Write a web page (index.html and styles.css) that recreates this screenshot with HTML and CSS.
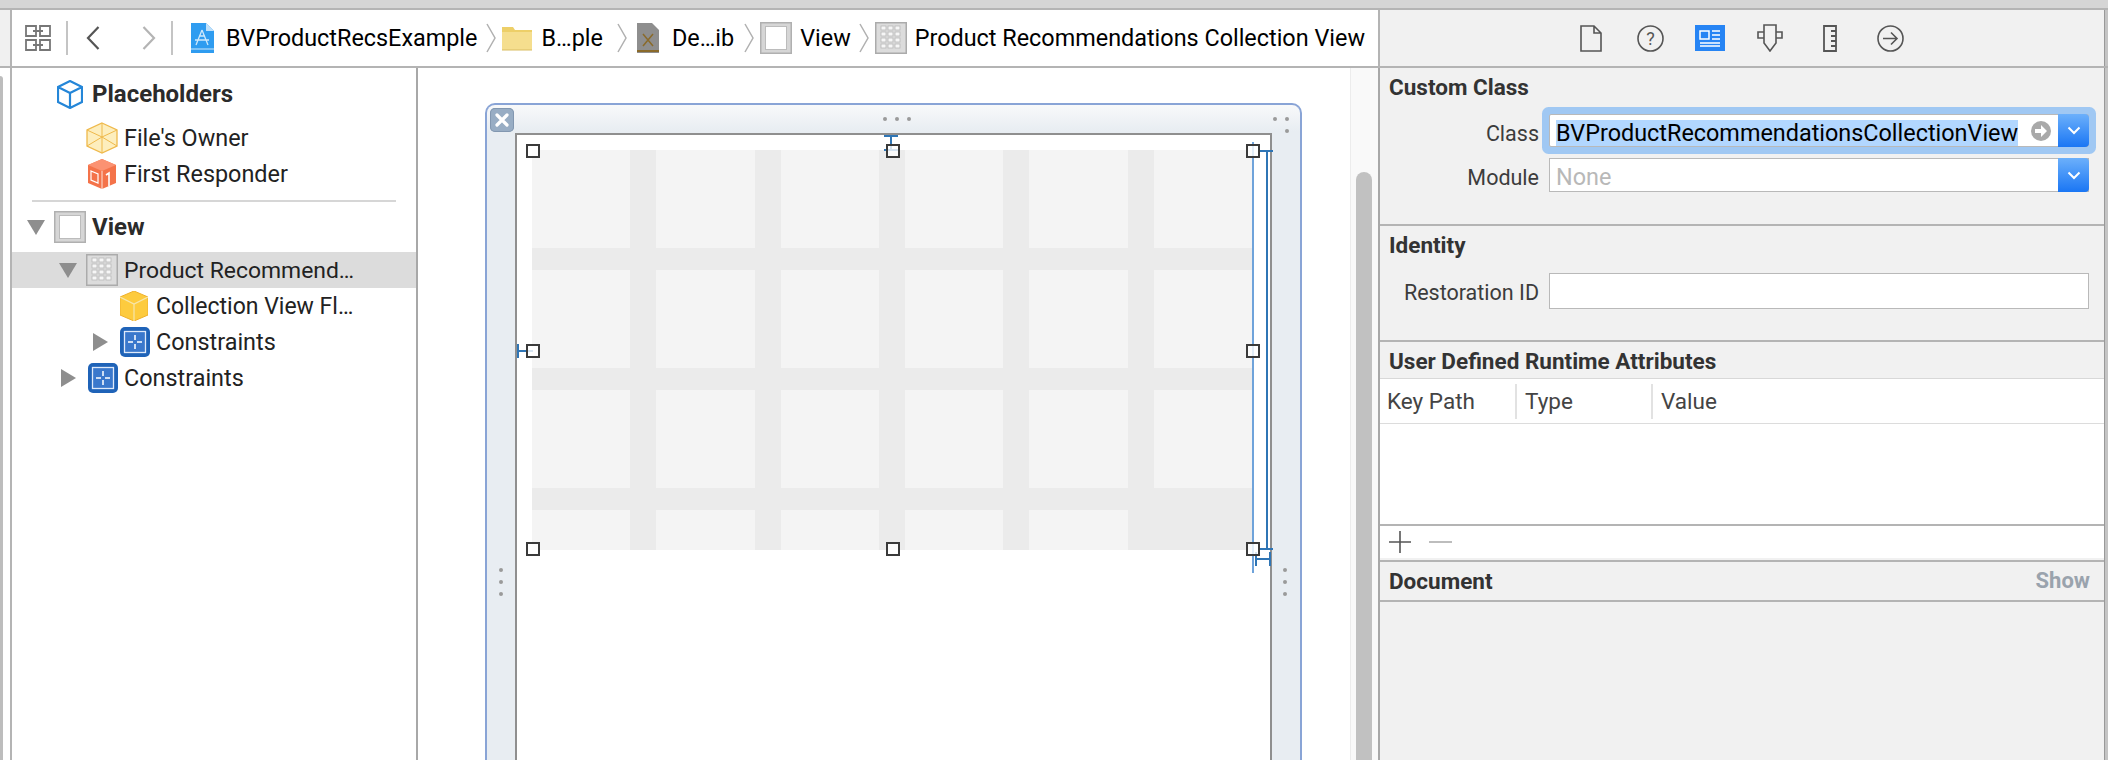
FILE: index.html
```html
<!DOCTYPE html>
<html lang="en">
<head>
<meta charset="utf-8">
<title>Xcode Interface Builder</title>
<link rel="stylesheet" href="styles.css">
</head>
<body>
<svg class="defs" width="0" height="0" aria-hidden="true">
  <symbol id="i-view" viewBox="0 0 32 32">
    <rect x=".75" y=".75" width="30.500" height="30.500" fill="#d6d6d6" stroke="#b0b0b0" stroke-width="1.500"/>
    <rect x="5.500" y="4.500" width="21" height="23" fill="#fff" stroke="#bcbcbc"/>
  </symbol>
  <symbol id="i-grid" viewBox="0 0 32 32">
    <rect x=".75" y=".75" width="30.500" height="30.500" fill="#dcdcdc" stroke="#ababab" stroke-width="1.500"/>
    <g fill="#f6f6f6" stroke="#b8b8b8" stroke-width=".8">
      <rect x="6" y="4" width="5" height="4"/><rect x="13" y="4" width="5" height="4"/><rect x="20" y="4" width="5" height="4"/>
      <rect x="6" y="10" width="5" height="4"/><rect x="13" y="10" width="5" height="4"/><rect x="20" y="10" width="5" height="4"/>
      <rect x="6" y="16" width="5" height="4"/><rect x="13" y="16" width="5" height="4"/><rect x="20" y="16" width="5" height="4"/>
      <rect x="6" y="22" width="5" height="4"/><rect x="13" y="22" width="5" height="4"/><rect x="20" y="22" width="5" height="4"/>
    </g>
  </symbol>
  <symbol id="i-constraints" viewBox="0 0 30 30">
    <rect width="30" height="30" rx="5" fill="#1f63b8"/>
    <rect x="4.500" y="4.500" width="21" height="21" fill="#3a78cc" stroke="#dfeafa" stroke-width="1.300"/>
    <path d="M15 8v5M15 17v5M8 15h5M17 15h5" stroke="#fff" stroke-width="1.500"/>
  </symbol>
  <symbol id="i-chev" viewBox="0 0 10 30">
    <path d="M1 1l8 14-8 14" fill="none" stroke="#b0b0b0" stroke-width="1.500"/>
  </symbol>
</svg>

<div class="top-strip"></div>

<header class="toolbar">
  <div class="rail-left"></div>
  <nav class="crumbs">
    <svg class="t-grid" width="26" height="26" viewBox="0 0 26 26"><path d="M1 1h10v10H1zM15 1h10v10H15zM1 15h10v10H1zM15 15h10v10H15zM8 6h10M8 20h10" fill="none" stroke="#777" stroke-width="1.800"/></svg>
    <span class="t-sep t-sep-a"></span>
    <svg class="t-back" width="14" height="24" viewBox="0 0 14 24"><path d="M12.500 1L2 12l10.500 11" fill="none" stroke="#555" stroke-width="2.200"/></svg>
    <svg class="t-fwd" width="14" height="24" viewBox="0 0 14 24"><path d="M1.500 1L12 12 1.500 23" fill="none" stroke="#b4b4b4" stroke-width="2.200"/></svg>
    <span class="t-sep t-sep-b"></span>
    <svg class="c-app" width="24" height="30" viewBox="0 0 24 30"><path d="M1 0h15l8 8v22H1z" fill="#2f9cf0"/><path d="M16 0l8 8h-8z" fill="#bfe0fa"/><path d="M1 26h23" stroke="#cfe8fb" stroke-width="1"/><path d="M12 7L6 22M12 7l6 15M5 17h14M9 13h6" stroke="#cfe8fb" stroke-width="1.300" fill="none"/></svg>
    <span class="c-text c-t1">BVProductRecsExample</span>
    <svg class="c-chev" width="10" height="30"><use href="#i-chev"/></svg>
    <svg class="c-folder" width="30" height="25" viewBox="0 0 30 25"><path d="M0 1h11l2 3h17v20H0z" fill="#edcf68"/><path d="M0 6h30v18H0z" fill="#f5de8e"/><path d="M0 24h30" stroke="#d9bd62"/></svg>
    <span class="c-text c-t2">B…ple</span>
    <svg class="c-chev c-chev2" width="10" height="30"><use href="#i-chev"/></svg>
    <svg class="c-xib" width="22" height="30" viewBox="0 0 22 30"><path d="M0 0h15l7 7v23H0z" fill="#8e8e8e"/><path d="M0 28h22" stroke="#8a6a2a" stroke-width="2"/><path d="M6 11l10 12M16 11L6 23" stroke="#8a6a2a" stroke-width="1.500"/></svg>
    <span class="c-text c-t3">De…ib</span>
    <svg class="c-chev c-chev3" width="10" height="30"><use href="#i-chev"/></svg>
    <svg class="c-view" width="32" height="32"><use href="#i-view"/></svg>
    <span class="c-text c-t4">View</span>
    <svg class="c-chev c-chev4" width="10" height="30"><use href="#i-chev"/></svg>
    <svg class="c-gridicon" width="32" height="32"><use href="#i-grid"/></svg>
    <span class="c-text c-t5">Product Recommendations Collection View</span>
  </nav>
  <div class="tabs">
    <svg width="22" height="27" viewBox="0 0 22 27"><path d="M1 1h13l7 7v18H1zM14 1v7h7" fill="none" stroke="#555" stroke-width="1.600"/></svg>
    <svg width="27" height="27" viewBox="0 0 27 27"><circle cx="13.500" cy="13.500" r="12.500" fill="none" stroke="#555" stroke-width="1.600"/><text x="13.500" y="19.500" class="tab-q" text-anchor="middle">?</text></svg>
    <svg width="30" height="26" viewBox="0 0 30 26"><rect width="30" height="26" fill="#2684f4"/><path d="M5 6h9v8H5z" fill="none" stroke="#fff" stroke-width="1.500"/><path d="M17 6h8M17 10h8M17 14h8M5 18h20M5 21h20" stroke="#fff" stroke-width="1.500"/></svg>
    <svg width="26" height="28" viewBox="0 0 26 28"><path d="M7 1h12v18l-6 8-6-8zM7 8H1v6h6M19 8h6v6h-6" fill="none" stroke="#555" stroke-width="1.600"/></svg>
    <svg width="14" height="27" viewBox="0 0 14 27"><path d="M1 1h12v25H1zM13 6H8M13 11H8M13 16H8M13 21H8" fill="none" stroke="#555" stroke-width="1.800"/></svg>
    <svg width="27" height="27" viewBox="0 0 27 27"><circle cx="13.500" cy="13.500" r="12.500" fill="none" stroke="#555" stroke-width="1.600"/><path d="M6 13.500h14M14 7.500l6 6-6 6" fill="none" stroke="#555" stroke-width="1.600"/></svg>
  </div>
  <div class="rail-right"></div>
</header>

<main class="workspace">
  <div class="rail-left rail-work"><span class="rail-thumb"></span></div>

  <aside class="outline">
    <div class="row row-ph">
      <svg class="ic-ph" width="26" height="29" viewBox="0 0 26 29"><path d="M13 1l12 6v15l-12 6-12-6V7zM1 7l12 6 12-6M13 13v15" fill="none" stroke="#2486d8" stroke-width="2.200"/></svg>
      <span class="bold">Placeholders</span>
    </div>
    <div class="row row-owner">
      <svg width="32" height="32" viewBox="0 0 32 32"><path d="M16 1l15 7v16l-15 7-15-7V8z" fill="#fdeebd" stroke="#efb94b" stroke-width="1.300"/><path d="M1 8l15 7 15-7M16 15v16M16 1v14M1 24l15-9 15 9" fill="none" stroke="#efb94b" stroke-width="1"/></svg>
      <span>File's Owner</span>
    </div>
    <div class="row row-first">
      <svg width="28" height="30" viewBox="0 0 28 30"><path d="M14 0l14 6v18l-14 6-14-6V6z" fill="#f4734a"/><path d="M0 6l14 6 14-6-14-6z" fill="#fb9272"/><path d="M14 12v18" stroke="#fff" stroke-width=".8"/><path d="M3 12l7 3v9l-7-3z" fill="none" stroke="#fff" stroke-width="1.200"/><path d="M18 16l3-2v13" fill="none" stroke="#fff" stroke-width="1.600"/></svg>
      <span>First Responder</span>
    </div>
    <hr class="rule">
    <div class="row row-view">
      <span class="tri-down tri-view"></span>
      <svg width="32" height="32"><use href="#i-view"/></svg>
      <span class="bold">View</span>
    </div>
    <div class="row row-sel">
      <span class="tri-down"></span>
      <svg width="32" height="32"><use href="#i-grid"/></svg>
      <span>Product Recommend…</span>
    </div>
    <div class="row row-flow">
      <svg width="28" height="30" viewBox="0 0 28 30"><path d="M14 0l14 6v18l-14 6-14-6V6z" fill="#fdcb3e" stroke="#eeb02c"/><path d="M0 6l14 7 14-7M14 13v17" fill="none" stroke="#f6e6ac" stroke-width="1.200"/></svg>
      <span>Collection View Fl…</span>
    </div>
    <div class="row row-con1">
      <span class="tri-right"></span>
      <svg width="30" height="30"><use href="#i-constraints"/></svg>
      <span>Constraints</span>
    </div>
    <div class="row row-con2">
      <span class="tri-right"></span>
      <svg width="30" height="30"><use href="#i-constraints"/></svg>
      <span>Constraints</span>
    </div>
  </aside>

  <section class="canvas">
    <div class="frame">
      <span class="frame-close"><svg width="14" height="14" viewBox="0 0 14 14"><path d="M2 2l10 10M12 2L2 12" stroke="#fff" stroke-width="3.200" stroke-linecap="round"/></svg></span>
      <span class="dots dots-top"><i></i><i></i><i></i></span>
      <span class="dots dots-corner"><i></i><i></i><i></i></span>
      <span class="dots dots-left"><i></i><i></i><i></i></span>
      <span class="dots dots-right"><i></i><i></i><i></i></span>
      <div class="view">
        <div class="cv">
          <b></b><b></b><b></b><b></b><b></b><b></b>
          <b></b><b></b><b></b><b></b><b></b><b></b>
          <b></b><b></b><b></b><b></b><b></b><b></b>
          <b></b><b></b><b></b><b></b><b></b><b class="cell-dark"></b>
          <span class="sel-line"></span>
          <span class="c-v c-right"></span>
          <span class="c-h c-right-top"></span>
          <span class="c-h c-right-bot"></span>
          <span class="c-h c-beam-bot"></span>
          <span class="c-v c-beam-bot-l"></span>
          <span class="c-v c-beam-bot-r"></span>
          <span class="c-v c-beam-top"></span>
          <span class="c-h c-beam-top-a"></span>
          <span class="c-h c-beam-top-b"></span>
          <span class="c-h c-beam-left"></span>
          <span class="c-v c-beam-left-cap"></span>
          <span class="handle h-tl"></span>
          <span class="handle h-tc"></span>
          <span class="handle h-tr"></span>
          <span class="handle h-ml"></span>
          <span class="handle h-mr"></span>
          <span class="handle h-bl"></span>
          <span class="handle h-bc"></span>
          <span class="handle h-br"></span>
        </div>
      </div>
    </div>
  </section>
  <div class="scroller"><span class="scroller-thumb"></span></div>

  <aside class="inspector">
    <section class="panel panel-class">
      <h2>Custom Class</h2>
      <div class="form-row form-class">
        <label>Class</label>
        <div class="field field-focus">
          <span class="selected">BVProductRecommendationsCollectionView</span>
          <svg class="go" width="20" height="20" viewBox="0 0 20 20"><circle cx="10" cy="10" r="10" fill="#a9a9a9"/><path d="M4 8h6V4l6 6-6 6v-4H4z" fill="#fff"/></svg>
          <span class="drop"><svg width="14" height="9" viewBox="0 0 14 9"><path d="M1.500 1.500L7 7l5.500-5.500" fill="none" stroke="#fff" stroke-width="2"/></svg></span>
        </div>
      </div>
      <div class="form-row form-module">
        <label>Module</label>
        <div class="field">
          <span class="placeholder">None</span>
          <span class="drop"><svg width="14" height="9" viewBox="0 0 14 9"><path d="M1.500 1.500L7 7l5.500-5.500" fill="none" stroke="#fff" stroke-width="2"/></svg></span>
        </div>
      </div>
    </section>
    <section class="panel panel-identity">
      <h2>Identity</h2>
      <div class="form-row form-rest">
        <label>Restoration ID</label>
        <div class="field field-plain"></div>
      </div>
    </section>
    <section class="panel panel-attrs">
      <h2>User Defined Runtime Attributes</h2>
      <div class="table">
        <div class="thead">
          <span class="th th-key">Key Path</span>
          <span class="th th-type">Type</span>
          <span class="th th-value">Value</span>
        </div>
        <div class="tbody"></div>
      </div>
      <div class="table-foot">
        <svg width="24" height="24" viewBox="0 0 24 24"><path d="M12 1v22M1 12h22" stroke="#555" stroke-width="1.600"/></svg>
        <svg width="23" height="24" viewBox="0 0 23 24"><path d="M0 12h23" stroke="#bdbdbd" stroke-width="2"/></svg>
      </div>
    </section>
    <section class="panel panel-doc">
      <h2>Document</h2>
      <span class="show">Show</span>
    </section>
  </aside>
  <div class="rail-right"></div>
</main>
</body>
</html>
```
FILE: styles.css
```css
* { box-sizing: border-box; }
html, body { margin: 0; padding: 0; }
body {
  width: 2108px;
  height: 760px;
  overflow: hidden;
  display: flex;
  flex-direction: column;
  background: #fff;
  font-family: Roboto, "Liberation Sans", sans-serif;
  font-size: 23px;
  color: #222;
}
.defs { position: absolute; }
svg { display: block; flex: none; }

.top-strip { height: 10px; flex: none; background: #d5d5d5; border-bottom: 2px solid #b4b4b4; }

.toolbar {
  height: 58px;
  flex: none;
  display: flex;
  background: #fff;
  border-bottom: 2px solid #b4b4b4;
}
.rail-left { width: 12px; flex: none; background: #f0f0f0; border-right: 2px solid #b4b4b4; }
.rail-right { width: 4px; flex: none; background: #c4c4c4; border-left: 1px solid #999; }

.crumbs {
  width: 1366px;
  flex: none;
  display: flex;
  align-items: center;
  color: #000;
  white-space: nowrap;
}
.t-grid { margin-left: 13px; }
.t-sep { width: 2px; height: 34px; background: #c4c4c4; flex: none; }
.t-sep-a { margin-left: 15px; }
.t-back { margin-left: 18px; }
.t-fwd { margin-left: 42px; }
.t-sep-b { margin-left: 15px; }
.c-app { margin-left: 17px; }
.c-text { font-size: 23.4px; line-height: 28px; }
.c-t1 { margin-left: 12px; }
.c-chev { margin-left: 9px; }
.c-folder { margin-left: 6px; }
.c-t2 { margin-left: 9px; }
.c-chev2 { margin-left: 14px; }
.c-xib { margin-left: 10px; }
.c-t3 { margin-left: 13px; }
.c-chev3 { margin-left: 10px; }
.c-view { margin-left: 6px; }
.c-t4 { margin-left: 8px; }
.c-chev4 { margin-left: 8px; }
.c-gridicon { margin-left: 6px; }
.c-t5 { margin-left: 8px; }

.tabs {
  flex: 1;
  display: flex;
  align-items: center;
  background: #f1f1f1;
  border-left: 2px solid #b4b4b4;
  padding-left: 200px;
}
.tabs svg:nth-child(2) { margin-left: 35px; }
.tabs svg:nth-child(3) { margin-left: 31px; }
.tabs svg:nth-child(4) { margin-left: 32px; }
.tabs svg:nth-child(5) { margin-left: 40px; }
.tabs svg:nth-child(6) { margin-left: 40px; }
.tab-q { font: 18px Roboto, sans-serif; fill: #555; }

.workspace { flex: 1; min-height: 0; display: flex; overflow: hidden; }
.rail-work { background: #fff; position: relative; }
.rail-thumb { position: absolute; left: 0; top: 8px; bottom: 0; width: 3px; background: #bdbdbd; border-top-right-radius: 3px; }

.outline { width: 406px; flex: none; border-right: 2px solid #a8a8a8; padding-top: 8px; }
.row { display: flex; align-items: center; height: 36px; font-size: 23.4px; color: #222; white-space: nowrap; }
.bold { font-weight: 700; color: #2b2b2b; font-size: 24px; }
.row-ph { padding-left: 45px; height: 36px; }
.row-ph span { margin-left: 9px; }
.row-owner { padding-left: 74px; margin-top: 8px; }
.row-owner span { margin-left: 6px; }
.row-first { padding-left: 76px; }
.row-first span { margin-left: 8px; }
.rule { height: 2px; margin: 8px 20px 0 20px; border: 0; background: #d6d6d6; }
.row-view { height: 50px; padding-left: 15px; }
.row-view svg { margin-left: 9px; }
.row-view .bold { margin-left: 6px; }
.row-sel { background: #dcdcdc; padding-left: 47px; font-size: 22.9px; }
.row-sel svg { margin-left: 9px; }
.row-sel span:last-child { margin-left: 6px; }
.row-flow { padding-left: 108px; font-size: 23px; }
.row-flow span { margin-left: 8px; }
.row-con1 { padding-left: 81px; }
.row-con1 svg { margin-left: 12px; }
.row-con1 span:last-child { margin-left: 6px; }
.row-con2 { padding-left: 49px; }
.row-con2 svg { margin-left: 12px; }
.row-con2 span:last-child { margin-left: 6px; }
.tri-down { width: 0; height: 0; flex: none; border-left: 9px solid transparent; border-right: 9px solid transparent; border-top: 15px solid #8e8e8e; }
.tri-right { width: 0; height: 0; flex: none; border-top: 9px solid transparent; border-bottom: 9px solid transparent; border-left: 15px solid #8e8e8e; }

.canvas { width: 932px; flex: none; padding: 35px 0 0 67px; background: #fff; }
.frame {
  position: relative;
  width: 817px;
  height: 100%;
  padding: 28px 28px 0 28px;
  border: 2px solid #89a4d6;
  border-bottom: 0;
  border-radius: 10px 10px 0 0;
  background: linear-gradient(#f8f9fa, #e8edf2 26px);
}
.frame-close {
  position: absolute;
  left: 3px;
  top: 3px;
  width: 24px;
  height: 24px;
  display: flex;
  align-items: center;
  justify-content: center;
  border-radius: 5px;
  background: #98adc4;
  box-shadow: inset 0 0 0 1px #8297b0;
}
.dots { position: absolute; display: flex; gap: 8px; }
.dots i { width: 4px; height: 4px; border-radius: 50%; background: #9a9a9a; }
.dots-top { left: 396px; top: 12px; }
.dots-corner { left: 786px; top: 12px; width: 16px; flex-wrap: wrap; justify-content: flex-end; }
.dots-left, .dots-right { flex-direction: column; top: 463px; }
.dots-left { left: 12px; }
.dots-right { left: 796px; }

.view { width: 757px; height: 100%; border: 2px solid #8f8f8f; border-bottom: 0; background: #fff; padding: 15px; }
.cv {
  position: relative;
  width: 720px;
  height: 400px;
  display: grid;
  grid-template-columns: repeat(6, 1fr);
  grid-template-rows: 98px 98px 98px 40px;
  column-gap: 26px;
  row-gap: 22px;
  background: #ebebeb;
}
.cv b { background: #f4f4f4; }
.cv .cell-dark { background: #ebebeb; }

.handle { position: absolute; width: 14px; height: 14px; border: 2.500px solid #3a3a3a; background: rgba(255,255,255,.8); }
.h-tl { left: -6px; top: -6px; }
.h-tc { left: 354px; top: -6px; }
.h-tr { left: 714px; top: -6px; }
.h-ml { left: -6px; top: 194px; }
.h-mr { left: 714px; top: 194px; }
.h-bl { left: -6px; top: 392px; }
.h-bc { left: 354px; top: 392px; }
.h-br { left: 714px; top: 392px; }

.sel-line { position: absolute; left: 720px; top: -8px; width: 2px; height: 431px; background: #6fa3da; }
.c-v, .c-h { position: absolute; background: #2f75b5; }
.c-v { width: 2px; }
.c-h { height: 2px; }
.c-right { left: 734px; top: 0; height: 398px; }
.c-right-top { left: 727px; top: 0; width: 14px; }
.c-right-bot { left: 727px; top: 398px; width: 14px; }
.c-beam-bot { left: 723px; top: 408px; width: 14px; }
.c-beam-bot-l { left: 723px; top: 402px; height: 14px; }
.c-beam-bot-r { left: 737px; top: 402px; height: 14px; }
.c-beam-top { left: 358px; top: -15px; height: 14px; }
.c-beam-top-a { left: 352px; top: -15px; width: 14px; }
.c-beam-top-b { left: 352px; top: -1px; width: 14px; }
.c-beam-left { left: -15px; top: 200px; width: 16px; }
.c-beam-left-cap { left: -15px; top: 194px; height: 14px; }

.scroller { width: 28px; flex: none; display: flex; background: #f9f9f9; border-left: 1px solid #ececec; padding: 104px 0 0 5px; }
.scroller-thumb { display: block; width: 16px; border-radius: 8px 8px 0 0; background: #c1c1c1; }

.inspector { flex: 1; min-width: 0; background: #f1f1f1; border-left: 2px solid #a8a8a8; }
.panel { position: relative; border-bottom: 2px solid #b4b4b4; }
.panel h2 { margin: 0; padding-left: 9px; font-size: 22.5px; font-weight: 700; color: #333; line-height: 38px; height: 38px; }
.panel-class { height: 158px; }
.panel-identity { height: 116px; }
.panel-attrs { height: 220px; }
.panel-attrs h2 { height: 36px; line-height: 38px; }
.panel-doc { height: 40px; }

.form-row { display: flex; align-items: center; padding-right: 15px; }
.form-row label { width: 159px; flex: none; text-align: right; font-size: 21.500px; color: #3c3c3c; margin-right: 10px; }
.form-class label { padding-top: 5px; }
.form-module label { padding-top: 4px; }
.form-rest label { padding-top: 2px; }
.field { flex: 1; display: flex; align-items: center; background: #fff; border: 1px solid #b9b9b9; position: relative; }
.form-class { margin-top: 8px; height: 33px; }
.form-class .field { height: 33px; box-shadow: 0 0 0 7px #a0c8f3; border-radius: 2px; }
.form-module { margin-top: 11px; height: 34px; }
.form-module .field { height: 34px; }
.form-rest { margin-top: 9px; height: 36px; }
.form-rest .field { height: 36px; }
.selected { margin-left: 6px; margin-top: 4px; height: 26px; line-height: 27px; background: #b2d7ff; color: #000; font-size: 23.4px; white-space: nowrap; }
.placeholder { margin-left: 6px; margin-top: 3px; color: #b8b8b8; font-size: 23.4px; }
.go { position: absolute; right: 37px; top: 6px; }
.drop {
  position: absolute;
  right: -1px;
  top: -1px;
  bottom: -1px;
  width: 31px;
  display: flex;
  align-items: center;
  justify-content: center;
  background: linear-gradient(#6cb0fb, #1a76f4);
  border-radius: 0 4px 4px 0;
}

.table { background: #fff; border-top: 1px solid #d8d8d8; }
.thead { height: 45px; display: flex; align-items: center; border-bottom: 1px solid #dcdcdc; }
.th { font-size: 22.5px; color: #444; height: 35px; line-height: 35px; padding-left: 8px; }
.th-key { width: 135px; padding-left: 7px; }
.th-type { width: 136px; border-left: 2px solid #e2e2e2; }
.th-value { flex: 1; border-left: 2px solid #e2e2e2; }
.tbody { height: 100px; }
.table-foot { height: 34px; display: flex; align-items: center; gap: 17px; padding-left: 8px; background: #fff; border-top: 2px solid #b4b4b4; }
.panel-doc { display: flex; justify-content: space-between; align-items: flex-start; padding-right: 14px; }
.show { font-size: 22px; font-weight: 700; color: #9aa3ad; line-height: 38px; }
```
